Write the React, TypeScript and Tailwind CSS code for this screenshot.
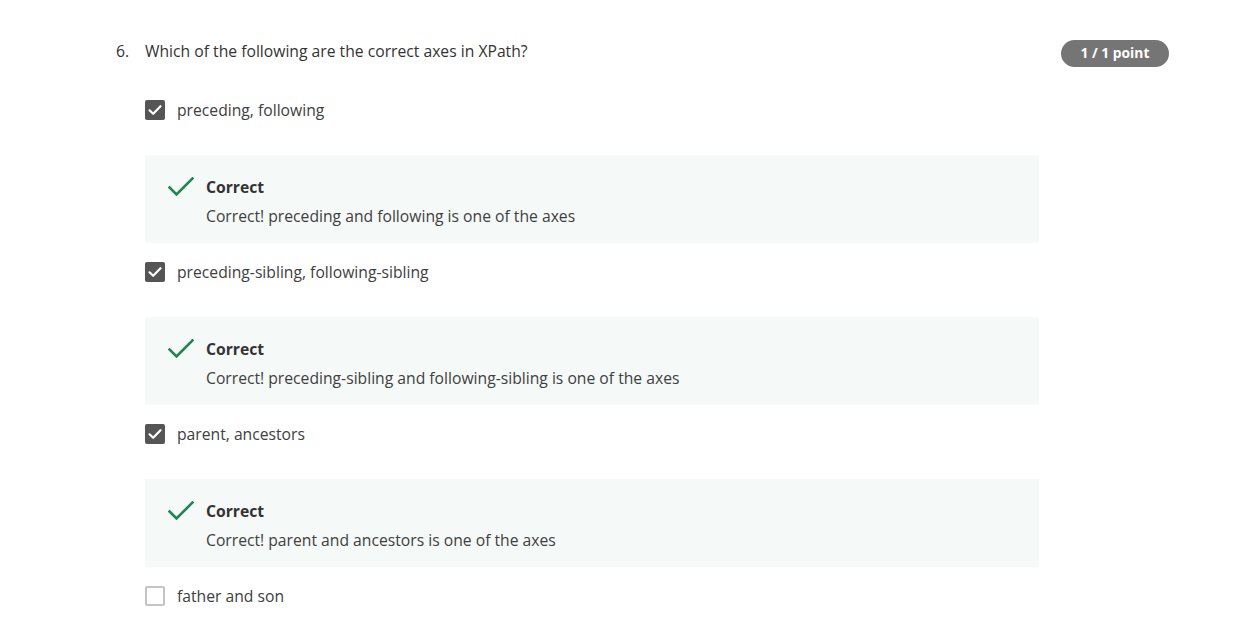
import React from 'react';

type Option = {
    label: string;
    checked: boolean;
    feedback?: string;
};

const options: Option[] = [
    { label: 'preceding, following', checked: true, feedback: 'Correct! preceding and following is one of the axes' },
    { label: 'preceding-sibling, following-sibling', checked: true, feedback: 'Correct! preceding-sibling and following-sibling is one of the axes' },
    { label: 'parent, ancestors', checked: true, feedback: 'Correct! parent and ancestors is one of the axes' },
    { label: 'father and son', checked: false },
];

const Checkbox = ({ checked }: { checked: boolean }) =>
    checked ? (
        <div className="w-5 h-5 rounded-[2px] bg-[#555555] flex items-center justify-center shrink-0">
            <svg width="16" height="16" viewBox="0 0 16 16" fill="none">
                <path d="M2.5 8.3 L6.2 11.8 L13.5 4.2" stroke="#ffffff" strokeWidth="2.2" strokeLinecap="round" strokeLinejoin="round" />
            </svg>
        </div>
    ) : (
        <div className="w-5 h-5 rounded-[2px] border-2 border-[#c4c4c4] bg-white shrink-0" />
    );

const CheckMark = () => (
    <svg width="26" height="20" viewBox="0 0 26 20" fill="none" className="shrink-0">
        <path d="M1.5 10.5 L8.5 17.5 L24.5 1.5" stroke="#1f8354" strokeWidth="2.6" strokeLinecap="square" />
    </svg>
);

export default function App() {
    return (
        <div className="min-h-screen bg-white text-[#333333]" style={{ fontFamily: '"Open Sans", "Noto Sans", sans-serif' }}>
            <div className="pl-[116px] pr-[85px] pt-[39px]">
                <div className="flex items-start">
                    <div className="w-[29px] text-[15.7px] leading-6">6.</div>
                    <div className="flex-1 text-[15.7px] leading-6">Which of the following are the correct axes in XPath?</div>
                    <div className="mt-px h-[27px] w-[108px] rounded-full bg-[#757575] text-white text-[13.8px] font-bold flex items-center justify-center">
                        1 / 1 point
                    </div>
                </div>

                <div className="pl-[29px] pt-[31px] w-[923px]">
                    {options.map((opt, i) => (
                        <div key={i} className={i === 0 ? '' : 'mt-[17px]'}>
                            <div className="flex items-center h-6">
                                <Checkbox checked={opt.checked} />
                                <span className="ml-3 text-[15.7px] leading-6 text-[#404040]">{opt.label}</span>
                            </div>
                            {opt.feedback && (
                                <div className="mt-[33px] h-[88px] bg-[#f5f9f8] pl-[23px] pt-5">
                                    <div className="flex items-center h-6">
                                        <CheckMark />
                                        <span className="ml-[12px] text-[15.7px] font-bold leading-6 text-[#333333]">Correct</span>
                                    </div>
                                    <div className="mt-[5px] pl-[38px] text-[15.7px] leading-6 text-[#404040]">{opt.feedback}</div>
                                </div>
                            )}
                        </div>
                    ))}
                </div>
            </div>
        </div>
    );
}
